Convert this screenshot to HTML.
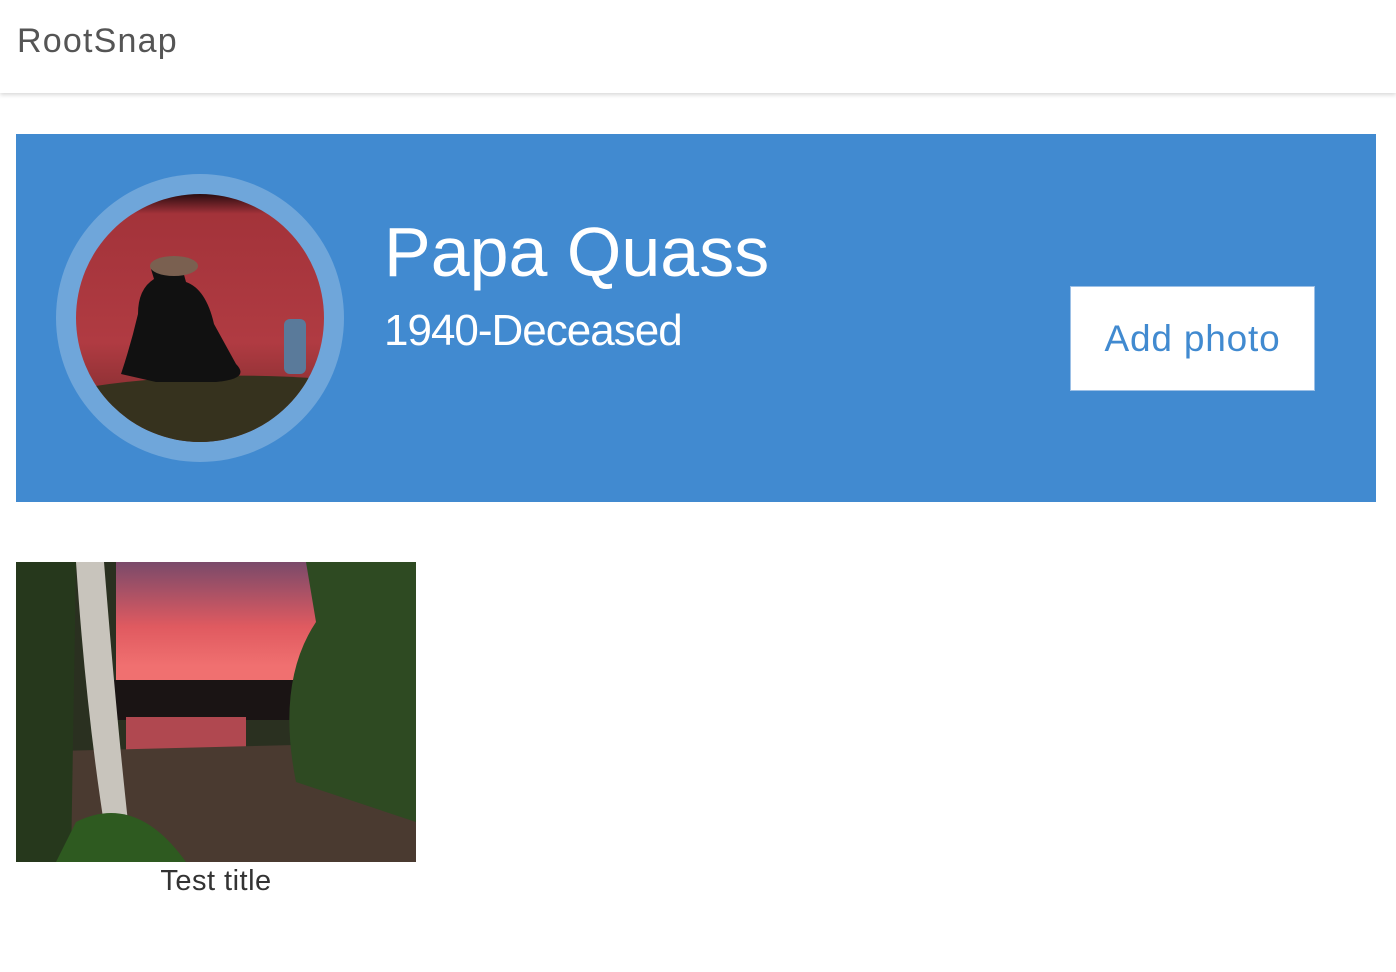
<!DOCTYPE html>
<html><head><meta charset="utf-8"><style>
body{margin:0;background:#fff;font-family:"Liberation Sans",sans-serif;width:1396px;height:972px;overflow:hidden;position:relative}
.hdr{position:absolute;left:0;top:0;width:1396px;height:93px;background:#fff;box-shadow:0 2px 4px rgba(0,0,0,.15)}
.logo{position:absolute;left:17px;top:22px;font-size:34px;color:#555;letter-spacing:1.2px}
.ban{position:absolute;left:16px;top:134px;width:1360px;height:368px;background:#418ad0}
.ring{position:absolute;left:40px;top:40px;width:288px;height:288px;border-radius:50%;background:#6fa6da}
.av{position:absolute;left:20px;top:20px;width:248px;height:248px;border-radius:50%;overflow:hidden}
.name{position:absolute;left:368px;top:78px;font-size:70px;color:#fff}
.yrs{position:absolute;left:368px;top:172px;font-size:44px;color:#fff;letter-spacing:-1px}
.btn{position:absolute;left:1054px;top:152px;width:243px;height:103px;background:#fff;border:1px solid #9cc0e6;color:#418ad0;font-size:37px;text-align:center;line-height:103px;letter-spacing:.8px}
.ph{position:absolute;left:16px;top:562px;width:400px;height:300px}
.cap{position:absolute;left:16px;top:865px;width:400px;text-align:center;font-size:29px;color:#333;letter-spacing:.5px}
</style></head><body>
<div class="hdr"><div class="logo">RootSnap</div></div>
<div class="ban">
 <div class="ring"><div class="av"><svg width="248" height="248" viewBox="0 0 248 248">
  <defs><linearGradient id="w" x1="0" y1="0" x2="0" y2="1"><stop offset="0" stop-color="#2a0c10"/><stop offset=".08" stop-color="#a3333a"/><stop offset=".6" stop-color="#b03b42"/><stop offset="1" stop-color="#6a2626"/></linearGradient></defs>
  <rect width="248" height="248" fill="url(#w)"/>
  <path d="M0 195 Q120 175 248 185 L248 248 L0 248Z" fill="#36321e"/>
  <path d="M75 75 Q90 60 105 70 L110 88 Q130 95 138 130 L160 170 Q175 185 140 188 L80 188 L45 180 Q55 150 62 120 Q62 95 78 85Z" fill="#111"/>
  <ellipse cx="98" cy="72" rx="24" ry="10" fill="#7a6050"/>
  <rect x="208" y="125" width="22" height="55" rx="6" fill="#5a7a9a"/>
 </svg></div></div>
 <div class="name">Papa Quass</div>
 <div class="yrs">1940-Deceased</div>
 <div class="btn">Add photo</div>
</div>
<svg class="ph" viewBox="0 0 400 300">
 <defs><linearGradient id="s" x1="0" y1="0" x2="0" y2="1"><stop offset="0" stop-color="#7a4a6a"/><stop offset=".5" stop-color="#e05a60"/><stop offset=".8" stop-color="#f07070"/></linearGradient></defs>
 <rect width="400" height="300" fill="#2a3020"/>
 <rect x="100" y="0" width="220" height="130" fill="url(#s)"/>
 <rect x="90" y="118" width="230" height="40" fill="#1a1414"/>
 <rect x="110" y="155" width="120" height="35" fill="#b04850"/>
 <path d="M0 190 L400 180 L400 300 L0 300Z" fill="#4a3a30"/>
 <path d="M290 0 L400 0 L400 260 L280 220 Q260 120 300 60Z" fill="#2e4a22"/>
 <path d="M0 0 L60 0 L55 300 L0 300Z" fill="#26381c"/>
 <path d="M60 0 L88 0 Q100 150 112 260 L90 275 Q70 150 60 0Z" fill="#c8c4bc"/>
 <path d="M60 260 Q120 230 170 300 L40 300Z" fill="#2e5a20"/>
</svg>
<div class="cap">Test title</div>
</body></html>
